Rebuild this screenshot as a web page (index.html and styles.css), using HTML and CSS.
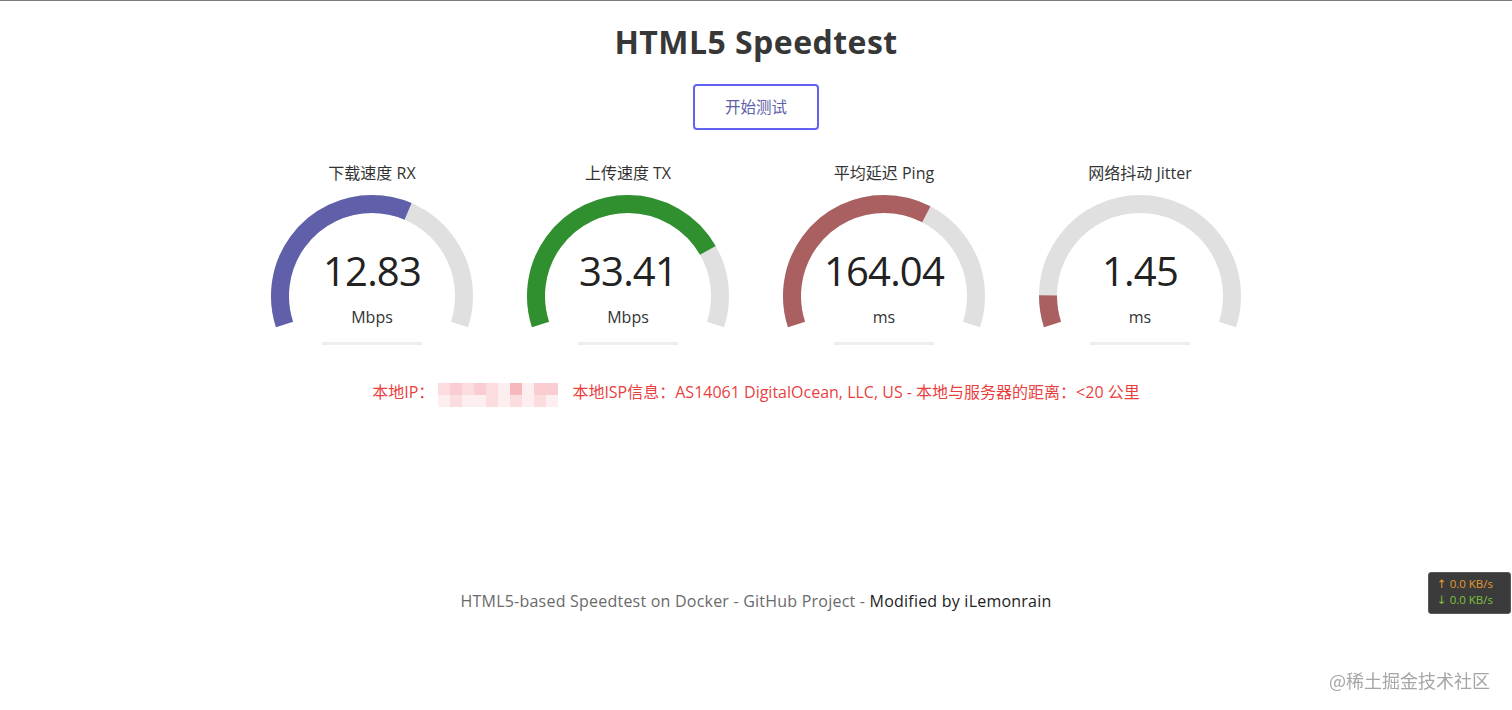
FILE: index.html
```html
<!DOCTYPE html>
<html lang="zh-CN">
<head>
<meta charset="utf-8">
<title>HTML5 Speedtest</title>
<link rel="stylesheet" href="styles.css">
</head>
<body>
<main class="page">
  <h1 class="title">HTML5 Speedtest</h1>
  <button class="start-btn" type="button">开始测试</button>

  <section class="gauges">
    <div class="gauge">
      <div class="gauge-label">下载速度 RX</div>
      <div class="gauge-meter">
        <svg class="gauge-svg" viewBox="0 0 256 152" width="256" height="152">
          <path class="track" d="M40.50 140.43 A92 92 0 1 1 215.50 140.43"/>
          <path class="fill fill-dl" pathLength="1" stroke-dasharray="0.607 2" d="M40.50 140.43 A92 92 0 1 1 215.50 140.43"/>
        </svg>
        <div class="gauge-value">
          <div class="gauge-number">12.83</div>
          <div class="gauge-unit">Mbps</div>
        </div>
      </div>
      <div class="gauge-progress"></div>
    </div>

    <div class="gauge">
      <div class="gauge-label">上传速度 TX</div>
      <div class="gauge-meter">
        <svg class="gauge-svg" viewBox="0 0 256 152" width="256" height="152">
          <path class="track" d="M40.50 140.43 A92 92 0 1 1 215.50 140.43"/>
          <path class="fill fill-ul" pathLength="1" stroke-dasharray="0.779 2" d="M40.50 140.43 A92 92 0 1 1 215.50 140.43"/>
        </svg>
        <div class="gauge-value">
          <div class="gauge-number">33.41</div>
          <div class="gauge-unit">Mbps</div>
        </div>
      </div>
      <div class="gauge-progress"></div>
    </div>

    <div class="gauge">
      <div class="gauge-label">平均延迟 Ping</div>
      <div class="gauge-meter">
        <svg class="gauge-svg" viewBox="0 0 256 152" width="256" height="152">
          <path class="track" d="M40.50 140.43 A92 92 0 1 1 215.50 140.43"/>
          <path class="fill fill-ping" pathLength="1" stroke-dasharray="0.627 2" d="M40.50 140.43 A92 92 0 1 1 215.50 140.43"/>
        </svg>
        <div class="gauge-value">
          <div class="gauge-number">164.04</div>
          <div class="gauge-unit">ms</div>
        </div>
      </div>
      <div class="gauge-progress"></div>
    </div>

    <div class="gauge">
      <div class="gauge-label">网络抖动 Jitter</div>
      <div class="gauge-meter">
        <svg class="gauge-svg" viewBox="0 0 256 152" width="256" height="152">
          <path class="track" d="M40.50 140.43 A92 92 0 1 1 215.50 140.43"/>
          <path class="fill fill-ping" pathLength="1" stroke-dasharray="0.085 2" d="M40.50 140.43 A92 92 0 1 1 215.50 140.43"/>
        </svg>
        <div class="gauge-value">
          <div class="gauge-number">1.45</div>
          <div class="gauge-unit">ms</div>
        </div>
      </div>
      <div class="gauge-progress"></div>
    </div>
  </section>

  <div class="ip-info">
    <span>本地IP：</span>
    <div class="mosaic" aria-hidden="true">
      <i class="m1"></i><i class="m2"></i><i class="m1"></i><i class="m2"></i><i class="m1"></i><i class="m0"></i><i class="m3"></i><i class="m0"></i><i class="m2"></i><i class="m2"></i>
      <i class="m0"></i><i class="m1"></i><i class="m0"></i><i class="m0"></i><i class="m1"></i><i class="m0"></i><i class="m1"></i><i class="m0"></i><i class="m1"></i><i class="m0"></i>
    </div>
    <span>本地ISP信息：AS14061 DigitalOcean, LLC, US - 本地与服务器的距离：&lt;20 公里</span>
  </div>

  <footer class="footer">
    <span class="footer-muted">HTML5-based Speedtest on Docker - GitHub Project - </span><span class="footer-strong">Modified by iLemonrain</span>
  </footer>
</main>

<div class="net-tray">
  <div class="tray-up"><span class="tray-arrow">↑</span> 0.0 KB/s</div>
  <div class="tray-down"><span class="tray-arrow">↓</span> 0.0 KB/s</div>
</div>

<div class="watermark">@稀土掘金技术社区</div>
</body>
</html>
```

FILE: styles.css
```css
* {
  box-sizing: border-box;
}

html,
body {
  margin: 0;
  padding: 0;
}

body {
  background: #ffffff;
  border-top: 1px solid #7a7a7a;
  font-family: "Open Sans", "Noto Sans CJK SC", sans-serif;
  color: #333333;
  min-height: 709px;
}

.page {
  display: flex;
  flex-direction: column;
  align-items: center;
}

.title {
  margin: 21px 0 0;
  font-size: 32px;
  line-height: 40px;
  font-weight: 700;
  color: #373737;
  letter-spacing: 0.45px;
}

.start-btn {
  margin-top: 22px;
  width: 126px;
  height: 46px;
  padding: 0;
  border: 2px solid #6262f0;
  border-radius: 4px;
  background: #ffffff;
  color: #6060aa;
  font-family: "Open Sans", "Noto Sans CJK SC", sans-serif;
  font-size: 15.5px;
  line-height: 22px;
}

.gauges {
  margin-top: 32px;
  display: flex;
  justify-content: center;
}

.gauge {
  width: 256px;
  display: flex;
  flex-direction: column;
  align-items: center;
}

.gauge-label {
  font-size: 16px;
  line-height: 22px;
  color: #333333;
}

.gauge-meter {
  display: grid;
  width: 256px;
  height: 152px;
}

.gauge-svg,
.gauge-value {
  grid-area: 1 / 1;
}

.gauge-svg {
  display: block;
}

.track,
.fill {
  fill: none;
  stroke-width: 18;
  stroke-linecap: butt;
}

.track {
  stroke: #e0e0e0;
}

.fill-dl {
  stroke: #6060aa;
}

.fill-ul {
  stroke: #309030;
}

.fill-ping {
  stroke: #aa6060;
}

.gauge-value {
  display: flex;
  flex-direction: column;
  align-items: center;
  padding-top: 63px;
}

.gauge-number {
  font-size: 40px;
  line-height: 48px;
  letter-spacing: -0.8px;
  color: #222222;
}

.gauge-unit {
  margin-top: 11px;
  font-size: 16px;
  line-height: 22px;
  color: #333333;
}

.gauge-progress {
  margin-top: 6px;
  width: 100px;
  height: 3px;
  background: #eeeeee;
}

.ip-info {
  margin-top: 36px;
  display: flex;
  align-items: flex-start;
  font-family: "Open Sans", "Noto Sans CJK TC", "Noto Sans CJK SC", sans-serif;
  font-size: 16px;
  line-height: 22px;
  color: #ea3f3f;
  white-space: nowrap;
}

.mosaic {
  margin: 2px 14px 0 4px;
  width: 120px;
  height: 24px;
  display: grid;
  grid-template-columns: repeat(10, 12px);
  grid-template-rows: 12px 12px;
}

.mosaic i {
  display: block;
}

.mosaic .m0 {
  background: #fdeef0;
}

.mosaic .m1 {
  background: #fbdde0;
}

.mosaic .m2 {
  background: #f9cdd1;
}

.mosaic .m3 {
  background: #f6b8bd;
}

.footer {
  margin-top: 183px;
  font-size: 16px;
  line-height: 22px;
  letter-spacing: 0.22px;
}

.footer-muted {
  color: #6a6a6a;
}

.footer-strong {
  color: #222222;
}

.net-tray {
  position: fixed;
  right: 1px;
  top: 572px;
  width: 83px;
  height: 42px;
  padding: 3px 0 0 8px;
  background: #3b3b3b;
  border: 1px solid #595959;
  border-radius: 3px;
  font-family: "Open Sans", "DejaVu Sans", sans-serif;
  font-size: 11.5px;
  line-height: 16px;
}

.tray-up {
  color: #e39a2e;
}

.tray-down {
  color: #7cc23b;
}

.watermark {
  position: fixed;
  right: 22px;
  top: 667px;
  font-family: "Noto Sans CJK SC", sans-serif;
  font-size: 18px;
  line-height: 26px;
  color: #a6a6a6;
  text-shadow: 0 0 1px #ffffff;
}
```
